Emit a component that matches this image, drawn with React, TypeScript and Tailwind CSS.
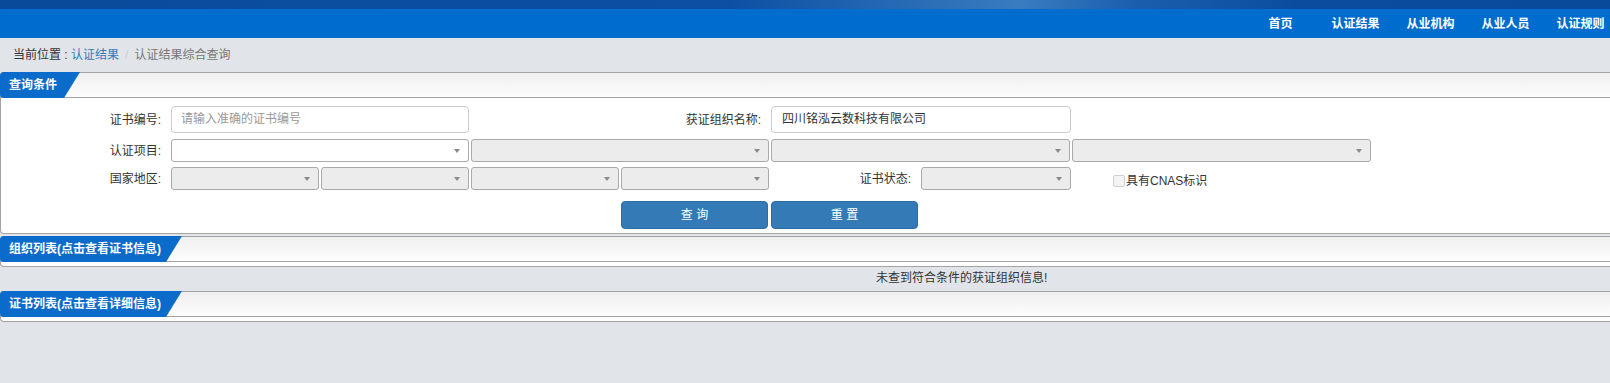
import { ReactNode } from "react";

const font = "font-['Liberation_Sans','Noto_Sans_CJK_SC',sans-serif]";

const navItems = ["首页", "认证结果", "从业机构", "从业人员", "认证规则"];

function Panel({ title, tabClass, bodyClass, children }: { title: string; tabClass: string; bodyClass: string; children?: ReactNode }) {
  return (
    <div className="rounded-l-[4px] border border-r-0 border-[#a3a3a3] bg-white">
      <div className="relative h-[25px] border-b border-[#a3a3a3] bg-gradient-to-b from-[#efefef] to-[#fdfdfd]">
        {/* blue tab sits over the header borders */}
        <div
          className={`absolute -left-px -top-px flex h-[26px] items-center rounded-l-[4px] bg-[#0a6bcb] pl-[9px] text-[12px] font-bold text-white [clip-path:polygon(0_0,100%_0,calc(100%-16px)_100%,0_100%)] ${tabClass}`}
        >
          {title}
        </div>
      </div>
      <div className={bodyClass}>{children}</div>
    </div>
  );
}

function Select({ className, disabled = true }: { className: string; disabled?: boolean }) {
  return (
    <div className={`relative h-[23px] rounded-[3px] border border-[#a9a9a9] ${disabled ? "bg-[#ececec]" : "bg-white"} ${className}`}>
      <span className="absolute right-[8px] top-[9px] h-0 w-0 border-x-[3px] border-t-[4px] border-x-transparent border-t-[#8a8a8a]" />
    </div>
  );
}

function Label({ text, className }: { text: string; className: string }) {
  return <div className={`shrink-0 pr-[10px] text-right text-[12px] text-[#333] ${className}`}>{text}</div>;
}

export default function App() {
  return (
    <div className={`h-[383px] w-[1610px] overflow-hidden bg-[#e1e5e9] ${font}`}>
      <div className="w-[1620px]">
        {/* top banner */}
        <div className="h-[9px] bg-[linear-gradient(90deg,#0a4a9b_0%,#0c50a3_45%,#3a7cc0_63%,#1a5fae_70%,#0b4c9e_80%,#0a4a9b_100%)]" />
        <div className="flex h-[29px] items-center justify-end bg-[#006cce] pr-[2px]">
          {navItems.map((n) => (
            <div key={n} className="w-[75px] text-center text-[12px] font-bold text-white">
              {n}
            </div>
          ))}
        </div>

        {/* breadcrumb */}
        <div className="flex h-[34px] items-center whitespace-pre pl-[13px] text-[12px]">
          <span className="text-[#333]">当前位置 : </span>
          <span className="text-[#337ab7]">认证结果</span>
          <span className="px-[6px] text-[#ccc]">/</span>
          <span className="text-[#777]">认证结果综合查询</span>
        </div>

        <Panel title="查询条件" tabClass="w-[80px]" bodyClass="flex flex-col pt-[8px] pb-[4px]">
          <div className="flex h-[27px] items-center">
            <Label text="证书编号:" className="w-[170px]" />
            <div className="h-[27px] w-[298px] rounded-[4px] border border-[#ccc] pl-[9px] text-[12px] leading-[25px] text-[#999]">
              请输入准确的证书编号
            </div>
            <Label text="获证组织名称:" className="w-[302px]" />
            <div className="h-[27px] w-[300px] rounded-[4px] border border-[#ccc] pl-[10px] text-[12px] leading-[25px] text-[#333]">
              四川铭泓云数科技有限公司
            </div>
          </div>
          <div className="mt-[6px] flex items-center">
            <Label text="认证项目:" className="w-[170px]" />
            <div className="flex gap-[2px]">
              <Select className="w-[298px]" disabled={false} />
              <Select className="w-[298px]" />
              <Select className="w-[299px]" />
              <Select className="w-[299px]" />
            </div>
          </div>
          <div className="mt-[5px] flex h-[23px] items-center">
            <Label text="国家地区:" className="w-[170px]" />
            <div className="flex gap-[2px]">
              <Select className="w-[148px]" />
              <Select className="w-[148px]" />
              <Select className="w-[148px]" />
              <Select className="w-[148px]" />
            </div>
            <Label text="证书状态:" className="w-[152px]" />
            <Select className="w-[150px]" />
            <div className="ml-[42px] flex h-[23px] items-center self-start pt-[5px] text-[12px] leading-[14px] text-[#333]">
              <span className="mr-px h-[12px] w-[12px] rounded-[2px] border border-[#cfcfcf] bg-[#f4f4f4]" />
              具有CNAS标识
            </div>
          </div>
          <div className="mt-[11px] flex gap-[3px] pl-[620px]">
            <button className="h-[28px] w-[147px] rounded-[4px] border border-[#2e6da4] bg-[#337ab7] text-[12px] text-white">
              查 询
            </button>
            <button className="h-[28px] w-[147px] rounded-[4px] border border-[#2e6da4] bg-[#337ab7] text-[12px] text-white">
              重 置
            </button>
          </div>
        </Panel>

        <div className="mt-[2px]">
          <Panel title="组织列表(点击查看证书信息)" tabClass="w-[182px]" bodyClass="h-[4px]" />
        </div>
        <div className="h-[24px] pl-[876px] text-[12px] leading-[23px] text-[#333]">未查到符合条件的获证组织信息!</div>
        <Panel title="证书列表(点击查看详细信息)" tabClass="w-[182px]" bodyClass="h-[4px]" />
      </div>
    </div>
  );
}
